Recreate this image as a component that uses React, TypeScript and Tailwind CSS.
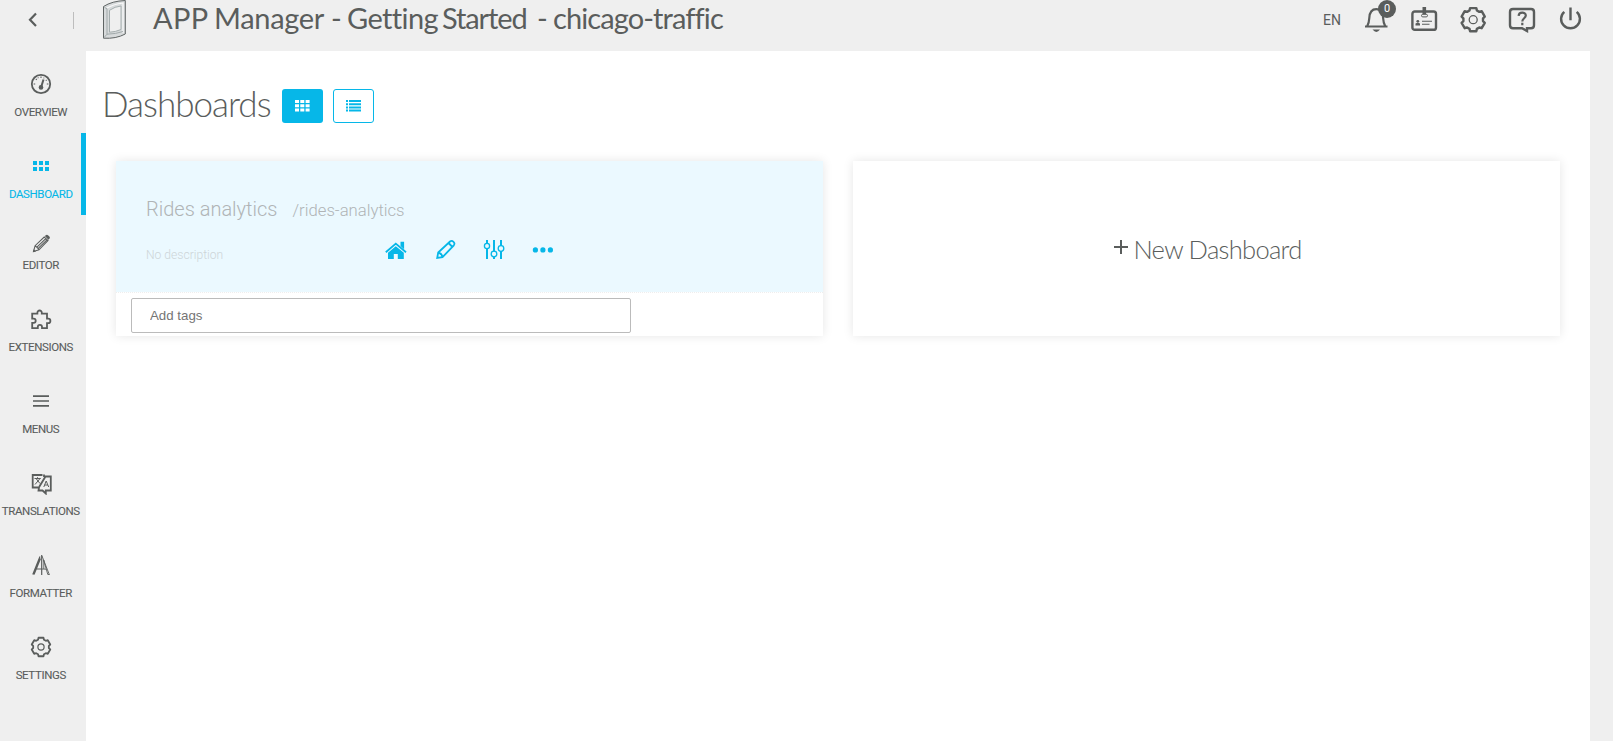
import type { ReactNode } from 'react';

const gear = (cx: number, cy: number, R: number, r: number) => {
  const pts: string[] = [];
  for (let i = 0; i < 6; i++) {
    const a = -90 + i * 60;
    [[-22, r], [-15, R], [15, R], [22, r]].forEach(([d, q]) => {
      const t = ((a + d) * Math.PI) / 180;
      pts.push(`${(cx + q * Math.cos(t)).toFixed(2)},${(cy + q * Math.sin(t)).toFixed(2)}`);
    });
  }
  return pts.join(' ');
};

const items: { label: string; icon: ReactNode; active?: boolean; short?: boolean }[] = [
  {
    label: 'OVERVIEW',
    icon: (
      <>
        <circle cx="12" cy="12" r="9.2" strokeWidth="1.8" />
        <path d="M12 4.5v1.6M4.6 12h1.6M17.8 12h1.6M6.8 6.8l1 1M9 5.4l.3.8M15 5.6l-.3.8M17.6 8l-.8.6" strokeWidth="1.1" />
        <path d="M14.5 7.5l-2.2 7" strokeWidth="2" />
        <circle cx="12" cy="15.4" r="2.3" fill="currentColor" stroke="none" />
      </>
    ),
  },
  {
    label: 'DASHBOARD',
    active: true,
    icon: <path d="M4 7h4v4H4zM10 7h4v4h-4zM16 7h4v4h-4zM4 13h4v4H4zM10 13h4v4h-4zM16 13h4v4h-4z" fill="currentColor" stroke="none" />,
  },
  {
    label: 'EDITOR',
    short: true,
    icon: (
      <>
        <path d="M4.5 21.5l1.6-5.8L15.2 7l3.8 3.6-9 9.2zM8.2 16.8l8.6-8.2M9.5 18.2l8.2-8M6.2 15.7l4 4" strokeWidth="1.1" />
        <path d="M15.8 6l1.4-1.1q1-.5 1.8.3l1.6 1.6q.7.9 0 1.7l-1.2 1.3zM4 22.2l.8-3 2.2 2.2z" fill="currentColor" stroke="none" />
      </>
    ),
  },
  {
    label: 'EXTENSIONS',
    icon: <path d="M3.2 6.7h5.2v-1a2.2 2.2 0 1 1 4.4 0v1H18v5h1.2a2.2 2.2 0 1 1 0 4.4H18v5h-5v-1.2a2 2 0 0 0-4.2 0v1.2H3.2v-5.2h1.4a2 2 0 0 0 0-4.2H3.2z" strokeWidth="1.8" />,
  },
  { label: 'MENUS', icon: <path d="M4 7.2h16M4 12h16M4 16.8h16" strokeWidth="1.7" /> },
  {
    label: 'TRANSLATIONS',
    icon: (
      <>
        <path d="M13.5 4H3.7v12.5H9M9.2 17.5L16.5 5.5h5.3v14h-5v3l-3.3-3H9.5l.5-3M15 3.5V6" strokeWidth="1.8" />
        <path d="M5.5 7.5h6.3M8.5 6.2v1.3M7 7.5l4 5M10.8 7.8L6 13.5M14.8 16l2.4-6 2.5 6M15.6 14h3.2" strokeWidth="1" />
      </>
    ),
  },
  {
    label: 'FORMATTER',
    icon: (
      <>
        <path d="M3.8 21.5L11 3.5M5 21.5l6.5-16M12.7 2v20M6.5 16h6" strokeWidth="1.2" />
        <path d="M13 3l7.3 18.5M14.8 7v9M12.6 16l5 .2M14.6 7l4.2 14.5h1.8" strokeWidth=".9" />
      </>
    ),
  },
  {
    label: 'SETTINGS',
    icon: (
      <>
        <polygon points={gear(12, 12, 9.6, 7.9)} strokeWidth="1.8" strokeLinejoin="round" />
        <circle cx="12" cy="12" r="3.1" strokeWidth="1.2" />
      </>
    ),
  },
];

function Cell({ children }: { children: ReactNode }) {
  return (
    <svg className="h-10 w-[49px] shrink-0" viewBox="0 0 49 40" fill="none" stroke="currentColor">
      {children}
    </svg>
  );
}

function Header() {
  return (
    <header className="flex h-[51px] items-start justify-between pr-[17px]">
      <div className="flex items-start">
        <svg className="h-10 w-[153px] shrink-0" viewBox="0 0 153 40" fill="none" stroke="currentColor">
          <path d="M36 13.5l-6 6.2 6 6.2" strokeWidth="2.2" />
          <path d="M73.5 12v17" stroke="#bdbdbd" strokeWidth="1" />
          <path d="M103.5 6.5Q112 1 125.3.5V34Q116 39 103.5 38.2z" fill="#d7dadb" stroke="#5f6464" strokeWidth="1" />
          <path d="M106 8.5Q114 4 123 3v30" stroke="#fafafa" strokeWidth="1.2" />
          <path d="M104.5 7.5l2.5 1.2v25.5l-2.8 3.2M107 34.2q9-.2 16-2.7" stroke="#9ba4a5" strokeWidth=".9" />
          <path d="M109.5 10.3Q115 6.5 121 6v23.5q-5.5 2.5-11.5 2.7z" fill="#efefef" stroke="#a4adae" strokeWidth="1" />
        </svg>
        <h1 className="flex whitespace-pre font-['Lato'] text-[29px] leading-[35px]">
          <span className="w-[61px] tracking-[0.4px]">APP </span>
          <span className="w-[117px] tracking-[-0.3px]">Manager </span>
          <span className="w-[16px] tracking-[-0.75px]">- </span>
          <span className="w-[95px] tracking-[-0.6px]">Getting </span>
          <span className="w-[95px] tracking-[-1.1px]">Started </span>
          <span className="w-[16px] tracking-[-0.75px]">- </span>
          <span className="tracking-[-0.9px]">chicago-traffic</span>
        </h1>
      </div>
      <div className="flex items-start">
        <span className="w-7 font-['Roboto'] text-[14px] leading-10">EN</span>
        <div className="relative">
          <Cell>
            <path d="M14 26.5h22.5M16.2 26.3q1.8-3 2.1-8.3c.3-5.5 2.5-8.8 7-8.8s6.5 3.5 6.8 8.8q.3 5.3 2.2 8.3" strokeWidth="2.2" />
            <path d="M21.5 29.6h7.5q-3.6 4.8-7.5 0z" fill="currentColor" stroke="none" />
          </Cell>
          <span className="absolute left-[27px] top-0 flex h-[18px] w-[18px] items-center justify-center rounded-full bg-[#5a5d5c] font-['Roboto'] text-[11px] text-white">
            0
          </span>
        </div>
        <Cell>
          <rect x="12.4" y="11.5" width="23.6" height="18.3" rx="2.4" strokeWidth="2.4" />
          <path d="M24.3 7v7.5" strokeWidth="3.6" />
          <rect x="21.5" y="14.3" width="6" height="2.6" rx="1.3" fill="#efefef" strokeWidth="1" />
          <circle cx="17.8" cy="21.3" r="1.4" fill="currentColor" stroke="none" />
          <path d="M15.5 25.6v-2q2.3-1.5 4.5 0v2z" fill="currentColor" stroke="none" />
          <path d="M22 21.3h10M22 24.3h7.5" strokeWidth="1.1" />
        </Cell>
        <Cell>
          <polygon points={gear(24.2, 19.7, 12, 9.9)} strokeWidth="2.4" strokeLinejoin="round" />
          <circle cx="24.2" cy="19.7" r="4" strokeWidth="1.3" />
        </Cell>
        <Cell>
          <path d="M15 9h18q3 0 3 3v13.2q0 3-3 3h-4v2.8l-5-2.8h-9q-3 0-3-3V12q0-3 3-3z" strokeWidth="2.4" />
          <path d="M20.6 15.8c.3-4.2 7.2-4.2 7.2-.2 0 2.6-3.5 2.8-3.5 5.8M24.3 22.8v2.4" strokeWidth="2.2" />
        </Cell>
        <Cell>
          <path d="M23.5 7.5v12.8M17.3 11.8a9.4 9.4 0 1 0 12.4 0" strokeWidth="2.4" />
        </Cell>
      </div>
    </header>
  );
}

function Sidebar() {
  return (
    <nav className="w-[86px] shrink-0">
      {items.map(({ label, icon, active, short }) => (
        <div
          key={label}
          className={`flex flex-col items-center border-r-[5px] ${short ? 'h-[71px] gap-[3px] pt-[15px]' : 'h-[82px] gap-[8px] pt-[21px]'} ${active ? 'border-[#06b7e8] text-[#06b7e8]' : 'border-transparent'}`}
        >
          <svg className="h-6 w-6 shrink-0" viewBox="0 0 24 24" fill="none" stroke="currentColor">
            {icon}
          </svg>
          <span className="pl-[0.5px] font-['Roboto'] text-[11.5px] leading-4 tracking-[-0.38px] [-webkit-text-stroke:0.1px_currentColor]">{label}</span>
        </div>
      ))}
    </nav>
  );
}

export default function App() {
  return (
    <div className="h-[741px] w-[1613px] overflow-hidden bg-[#efefef] text-[#5a5d5c]">
      <Header />
      <div className="flex h-[690px] pr-[23px]">
        <Sidebar />
        <main className="flex-1 bg-white px-[17px] pt-[34px]">
          <div className="flex h-[42px] items-center">
            <h2 className="-ml-px w-[180px] whitespace-nowrap pb-[5px] font-['Lato'] text-[35px] font-light leading-[37px] tracking-[-1px]">Dashboards</h2>
            <button className="flex h-[34px] w-[41px] items-center justify-center rounded-[3px] bg-[#06b7e8]">
              <svg className="mr-px h-3 w-[15px]" viewBox="0 0 15 12" fill="#fff">
                <path d="M0 0h4v3H0zM5.3 0h4v3h-4zM10.6 0h4v3h-4zM0 4.2h4v3H0zM5.3 4.2h4v3h-4zM10.6 4.2h4v3h-4zM0 8.4h4v3H0zM5.3 8.4h4v3h-4zM10.6 8.4h4v3h-4z" />
              </svg>
            </button>
            <button className="ml-[10px] flex h-[34px] w-[41px] items-center justify-center rounded-[3px] border border-[#06b7e8]">
              <svg className="mr-px h-3 w-[15px]" viewBox="0 0 15 12" fill="#06b7e8">
                <path d="M0 0h2v2H0zM3 0h12v2H3zM0 3.2h2v2H0zM3 3.2h12v2H3zM0 6.4h2v2H0zM3 6.4h12v2H3zM0 9.6h2v2H0zM3 9.6h12v2H3z" />
              </svg>
            </button>
          </div>
          <div className="mt-[34px] grid grid-cols-[707px_707px] gap-[30px] pl-[13px]">
            <section className="h-[175px] bg-white shadow-[0_0_10px_rgba(0,0,0,0.1)]">
              <div className="h-[132px] border-b border-dotted border-[#eeeeee] bg-[#ebf9ff] bg-clip-padding px-[30px] pt-[34px] font-['Roboto'] font-light text-[#b0b4b6]">
                <div className="flex h-7 items-baseline gap-[15px] leading-7">
                  <span className="text-[20px]">Rides analytics</span>
                  <span className="text-[16.7px]">/rides-analytics</span>
                </div>
                <div className="mt-[12px] flex h-[30px] items-center">
                  <span className="w-[233px] pt-[11px] text-[12.1px] text-[#cdd5d8]">No description</span>
                  <svg className="h-[26px] w-[182px] shrink-0 text-[#06b7e8]" viewBox="0 0 182 26" fill="none" stroke="currentColor">
                    <path d="M6.8 15.3L16.8 6.6l10.2 8.7" strokeWidth="1.8" />
                    <path d="M21.5 4.7h3.6v7.5l-3.6-3.2zM9 15.8l7.8-6.5 8 6.5V22h-6v-5h-4v5H9z" fill="currentColor" stroke="none" />
                    <path d="M58.2 21l1-5.5L71 4.5q1.8-1.3 3.5.3t.3 3.5L63.5 20.2zM59.2 15.5q3.5.8 4.3 4.7M69.5 6l4 4" strokeWidth="1.8" />
                    <path d="M108 3v3.5M108 11.5V22M115 3v11.5M115 19.5V22M122 3v6M122 14v8" strokeWidth="2" />
                    <circle cx="108" cy="9" r="2.6" strokeWidth="1.3" />
                    <circle cx="115" cy="17" r="2.8" strokeWidth="1.3" />
                    <circle cx="122" cy="11.5" r="2.8" strokeWidth="1.3" />
                    <path d="M153.8 12.9a2.6 2.6 0 1 0 5.2 0a2.6 2.6 0 1 0-5.2 0M161.3 12.9a2.6 2.6 0 1 0 5.2 0a2.6 2.6 0 1 0-5.2 0M168.8 12.9a2.6 2.6 0 1 0 5.2 0a2.6 2.6 0 1 0-5.2 0" fill="currentColor" stroke="none" />
                  </svg>
                </div>
              </div>
              <div className="pl-[15px] pt-[5px]">
                <input
                  className="block h-[35px] w-[500px] rounded-[2px] border border-[#bbbbbb] px-[18px] font-['Liberation_Sans'] text-[13.3px] placeholder:text-[#757575]"
                  placeholder="Add tags"
                />
              </div>
            </section>
            <section className="flex h-[175px] items-center justify-center bg-white pl-[3px] shadow-[0_0_10px_rgba(0,0,0,0.1)]">
              <svg className="mb-[3px] h-[14px] w-[14px]" viewBox="0 0 14 14" stroke="currentColor">
                <path d="M7 0v14M0 7h14" strokeWidth="2" />
              </svg>
              <span className="ml-[5px] whitespace-nowrap font-['Lato'] text-[25.5px] font-light leading-8 tracking-[-0.7px]">New Dashboard</span>
            </section>
          </div>
        </main>
      </div>
    </div>
  );
}
